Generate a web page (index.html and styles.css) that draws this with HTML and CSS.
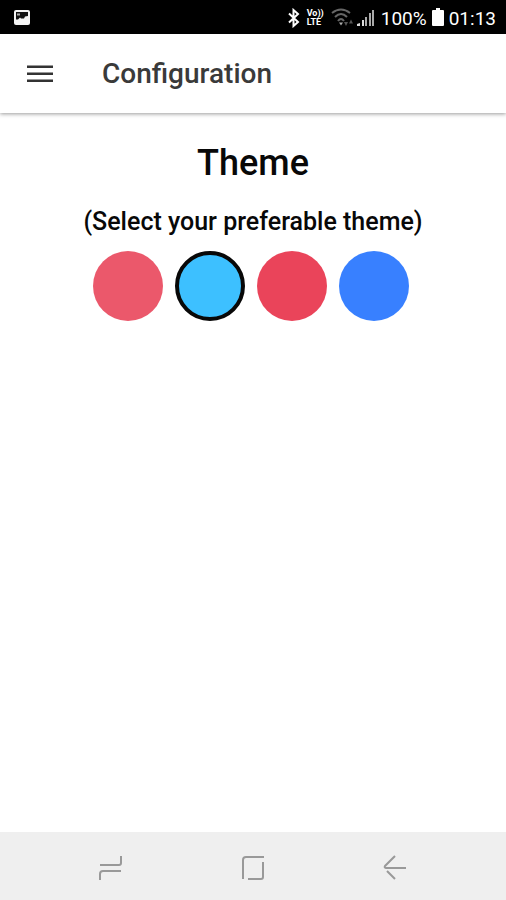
FILE: index.html
```html
<!DOCTYPE html>
<html lang="en">
<head>
<meta charset="utf-8">
<meta name="viewport" content="width=device-width, initial-scale=1">
<title>Configuration</title>
<link rel="stylesheet" href="styles.css">
</head>
<body>
<div class="status">
  <svg class="status-photo" width="16" height="16" viewBox="0 0 16 16" aria-hidden="true">
    <rect width="16" height="15" rx="2" fill="#f4f4f4"/>
    <path d="M2 2h12v4l-3 .5-1 2H7l-1-1-2 2H2z" fill="#111"/>
    <path d="M3 3.500h3v2H3z" fill="#aaa"/>
  </svg>
  <div class="status-group">
    <svg width="14" height="20" viewBox="0 0 14 20" aria-hidden="true" fill="none" stroke="#fff" stroke-width="2">
      <path d="M2 5.500l9 8.500-4.500 4V2L11 6l-9 8.500"/>
    </svg>
    <span class="volte"><span>Vo))</span><span>LTE</span></span>
    <svg class="wifi" width="24" height="20" viewBox="0 0 24 20" aria-hidden="true" fill="none" stroke="#666" stroke-width="2">
      <path d="M1 5Q10-2 19 5M4 9Q10 3 16 9M7 13Q10 9 13 13"/>
      <path d="M8 14.500h4l-2 3z" fill="#aaa" stroke="none"/>
      <path d="M13 14l2 4 2-4zM18 15.500l2-4 2 4z" fill="#555" stroke="none"/>
    </svg>
    <svg width="18" height="20" viewBox="0 0 18 20" aria-hidden="true">
      <path d="M0 18v-2l3-1v3zM5 12h2v6H5z" fill="#ddd"/>
      <path d="M8 9h2v9H8zM12 5h2v13h-2zM15 2h2v16h-2z" fill="#aaa"/>
    </svg>
    <span class="battery-text">100%</span>
    <svg class="battery" width="12" height="20" viewBox="0 0 12 20" aria-hidden="true" fill="#fff">
      <path d="M4 1h4v2h3q1 0 1 1v14q0 1-1 1H1q-1 0-1-1V4q0-1 1-1h3z"/>
    </svg>
    <time>01:13</time>
  </div>
</div>

<header class="toolbar">
  <button class="menu" type="button" aria-label="Menu">
    <svg width="26" height="18" viewBox="0 0 26 18" aria-hidden="true" fill="#333">
      <path d="M0 .5h26v2.500H0zM0 7.500h26V10H0zM0 14.500h26V17H0z"/>
    </svg>
  </button>
  <h1>Configuration</h1>
</header>

<main>
  <h2>Theme</h2>
  <fieldset class="themes">
    <legend>(Select your preferable theme)</legend>
    <div class="swatches">
      <input class="swatch rose" type="radio" name="theme" aria-label="Rose">
      <input class="swatch sky" type="radio" name="theme" aria-label="Sky" checked>
      <input class="swatch red" type="radio" name="theme" aria-label="Red">
      <input class="swatch blue" type="radio" name="theme" aria-label="Blue">
    </div>
  </fieldset>
</main>

<nav class="system-nav" aria-label="System">
  <button type="button" aria-label="Recent apps">
    <svg width="24" height="26" viewBox="0 0 24 26">
      <path d="M1 10h19q2 0 2-2V1M22 16H4q-3 0-3 3v6"/>
    </svg>
  </button>
  <button type="button" aria-label="Home">
    <svg width="24" height="26" viewBox="0 0 24 26">
      <path d="M2 24V5q0-3 3-3h18M22 7v15q0 2-2 2H7"/>
    </svg>
  </button>
  <button type="button" aria-label="Back">
    <svg width="24" height="26" viewBox="0 0 24 26">
      <path d="M12 1L2 11q-1 1.500 1 2h20M4 16l8 8"/>
    </svg>
  </button>
</nav>
</body>
</html>
```

FILE: styles.css
```css
* {
  box-sizing: border-box;
}

body {
  margin: 0;
  min-height: 100vh;
  display: flex;
  flex-direction: column;
  background: #fff;
  color: #080808;
  font-family: Roboto, "Liberation Sans", sans-serif;
}

button {
  padding: 0;
  border: 0;
  background: none;
}

svg {
  display: block;
}

.status {
  height: 34px;
  display: flex;
  align-items: center;
  justify-content: space-between;
  padding: 2px 10px 0 14px;
  background: #000;
  color: #fff;
  font-size: 19px;
}

.status-group {
  display: flex;
  align-items: center;
}

.volte {
  display: flex;
  flex-direction: column;
  margin: 0 7px 0 6px;
  font-size: 9px;
  line-height: 9px;
  font-weight: 700;
}

.wifi {
  margin-right: 2px;
}

.battery-text {
  margin-left: 6px;
}

.battery {
  margin: 0 5px 2px;
}

.toolbar {
  height: 79px;
  display: flex;
  align-items: center;
  gap: 49px;
  padding: 0 27px;
  box-shadow: 0 1px 4px rgba(0, 0, 0, 0.4);
}

h1 {
  margin: 0;
  color: #3a3a3a;
  font-size: 28px;
  font-weight: 500;
}

main {
  flex: 1;
  padding-top: 27px;
  text-align: center;
}

h2 {
  margin: 0;
  font-size: 36px;
  line-height: 46px;
  font-weight: 500;
}

.themes {
  margin: 20px 0 0;
  padding: 0;
  border: 0;
}

legend {
  margin: 0 auto;
  padding: 0;
  font-size: 25px;
  line-height: 32px;
  font-weight: 500;
}

.swatches {
  display: flex;
  justify-content: center;
  padding-top: 9px;
}

.swatch {
  appearance: none;
  width: 70px;
  height: 70px;
  margin: 4px 8px 4px 4px;
  border-radius: 50%;
}

.swatch:checked {
  border: 4px solid #080808;
}

.rose {
  background: #eb586b;
}

.sky {
  background: #3dc0ff;
}

.red {
  background: #ea445a;
}

.blue {
  background: #3880ff;
}

.system-nav {
  height: 68px;
  display: flex;
  justify-content: center;
  padding-top: 3px;
  background: #efefef;
}

.system-nav button {
  width: 28%;
  display: grid;
  place-items: center;
}

.system-nav svg {
  fill: none;
  stroke: #999;
  stroke-width: 2;
}
```
